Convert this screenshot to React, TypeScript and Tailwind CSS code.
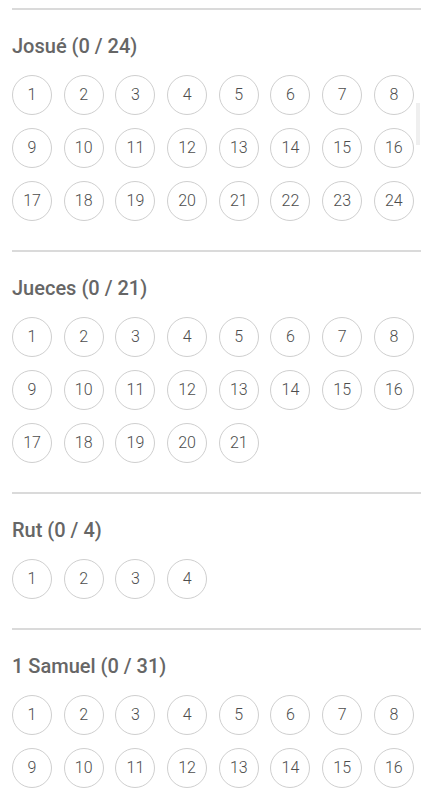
import React from 'react';

const books = [
  { name: 'Josué', count: 24 },
  { name: 'Jueces', count: 21 },
  { name: 'Rut', count: 4 },
  { name: '1 Samuel', count: 31 },
];

function Book({ name, count }: { name: string; count: number }) {
  return (
    <section>
      <div className="mr-[15px] h-[2px] bg-[#dadada]" />
      <h2 className="mt-[22px] text-[20px] leading-[28px] font-medium text-[#666666]">
        {name} (0 / {count})
      </h2>
      <div className="mt-[15px] mb-[29px] grid grid-cols-[repeat(8,40px)] gap-x-[11.7px] gap-y-[13px]">
        {Array.from({ length: count }, (_, i) => (
          <div
            key={i}
            className="w-10 h-10 rounded-full border border-[#cfcfcf] flex items-center justify-center text-[16px] font-light text-[#4d4d4d]"
          >
            {i + 1}
          </div>
        ))}
      </div>
    </section>
  );
}

export default function App() {
  return (
    <div
      className="relative w-[436px] h-[800px] overflow-hidden bg-white pt-2 pl-3"
      style={{ fontFamily: 'Roboto, "Liberation Sans", sans-serif' }}
    >
      {books.map((b) => (
        <Book key={b.name} name={b.name} count={b.count} />
      ))}
      {/* scrollbar thumb */}
      <div className="absolute left-[416px] top-[103px] w-1 h-[42px] bg-[#efefef]" />
    </div>
  );
}
